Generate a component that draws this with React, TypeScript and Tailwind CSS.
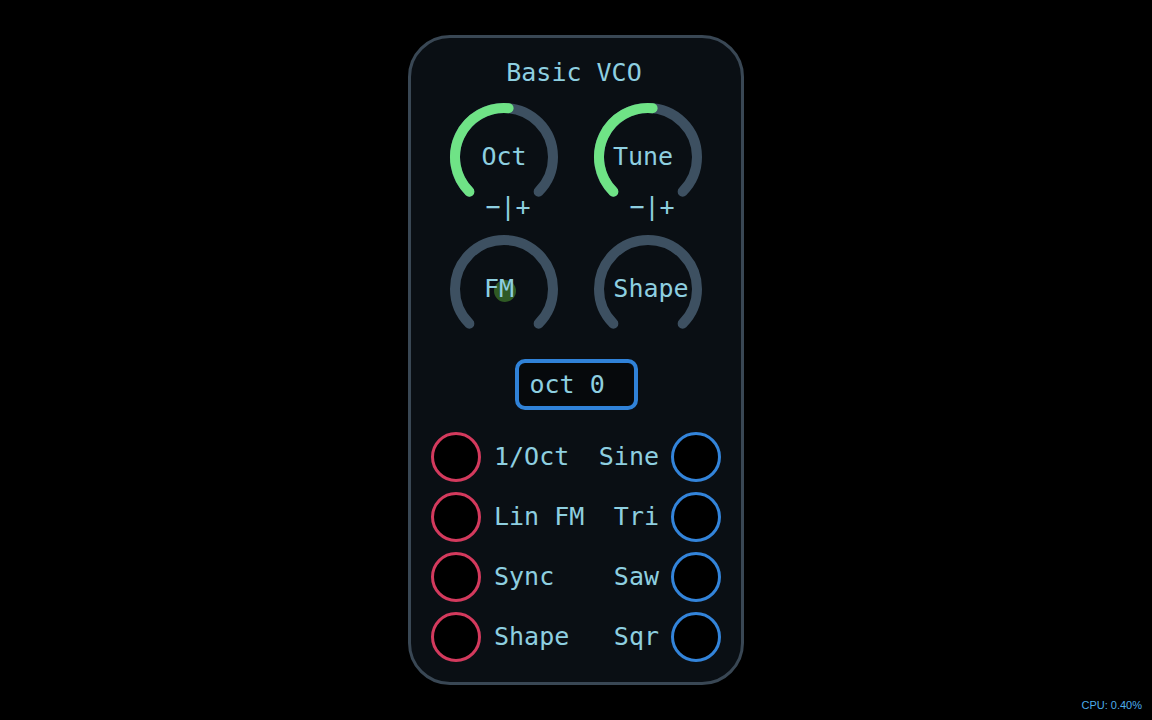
import React from "react"

const MONO = "font-['DejaVu_Sans_Mono','Liberation_Mono',monospace]"

// arc helpers — knob box is 110x110, radius 49, 270° sweep from bottom-left
const CX = 55
const CY = 55
const R = 49

function pointAt(fraction: number) {
  const a = ((225 - 270 * fraction) * Math.PI) / 180
  return { x: CX + R * Math.cos(a), y: CY - R * Math.sin(a) }
}

function arcPath(fraction: number) {
  const start = pointAt(0)
  const end = pointAt(fraction)
  const large = 270 * fraction > 180 ? 1 : 0
  return `M ${start.x} ${start.y} A ${R} ${R} 0 ${large} 1 ${end.x} ${end.y}`
}

interface KnobProps {
  label: string
  value: number
  labelClass?: string
  showRange?: boolean
  modDot?: boolean
}

function Knob({ label, value, labelClass = "", showRange, modDot }: KnobProps) {
  return (
    <div className="relative w-[110px] h-[110px] flex items-center justify-center">
      <svg width="110" height="110" className="absolute inset-0">
        <path d={arcPath(1)} fill="none" stroke="#3d5061" strokeWidth="10" strokeLinecap="round" />
        {value > 0 && (
          <path d={arcPath(value)} fill="none" stroke="#6fe386" strokeWidth="10" strokeLinecap="round" />
        )}
        {modDot && <circle cx="56" cy="57" r="11" fill="#2f5a24" />}
      </svg>
      <span className={`relative ${labelClass} ${MONO} text-[25px] leading-[30px] text-[#8ecfe0]`}>{label}</span>

      {/* range switch under the knob */}
      {showRange && (
        <span
          className={`absolute top-[92px] left-0 right-0 text-center pl-2 ${MONO} text-[25px] leading-[26px] text-[#8ecfe0]`}
        >
          −|+
        </span>
      )}
    </div>
  )
}

function Jack({ color }: { color: "red" | "blue" }) {
  return (
    <div
      className={`w-[50px] h-[50px] rounded-full bg-black border-[3px] ${
        color === "red" ? "border-[#d33a5d]" : "border-[#3384da]"
      }`}
    />
  )
}

const inputs = ["1/Oct", "Lin FM", "Sync", "Shape"]
const outputs = ["Sine", "Tri", "Saw", "Sqr"]

export default function App() {
  return (
    <div className="relative w-screen h-screen bg-black flex items-center justify-center">
      {/* Module panel */}
      <div className="w-[336px] h-[650px] rounded-[42px] border-[3px] border-[#394754] bg-[#0a0f14] flex flex-col items-center pt-[20px] px-[20px]">
        <div className={`${MONO} text-[25px] leading-[30px] h-[30px] text-[#8ecfe0] -translate-x-[2px]`}>
          Basic VCO
        </div>

        {/* Knobs */}
        <div className="mt-[14px] grid grid-cols-2 gap-x-[34px] gap-y-[22px]">
          <Knob label="Oct" value={0.52} showRange />
          <Knob label="Tune" value={0.52} showRange labelClass="-translate-x-[5px]" />
          <Knob label="FM" value={0} modDot labelClass="-translate-x-[5px]" />
          <Knob label="Shape" value={0} labelClass="translate-x-[3px]" />
        </div>

        {/* Display */}
        <div
          className={`mt-[15px] w-[123px] h-[51px] rounded-[10px] border-[4px] border-[#3082d8] bg-[#06090c] flex items-center pl-[11px] ${MONO} text-[25px] text-[#8ecfe0]`}
        >
          oct 0
        </div>

        {/* Jacks */}
        <div className="mt-[22px] w-full flex flex-col gap-[10px]">
          {inputs.map((inp, i) => (
            <div key={inp} className="flex items-center justify-between">
              <div className="flex items-center gap-[13px]">
                <Jack color="red" />
                <span className={`${MONO} text-[25px] leading-[30px] text-[#8ecfe0]`}>{inp}</span>
              </div>
              <div className="flex items-center gap-[12px]">
                <span className={`${MONO} text-[25px] leading-[30px] text-[#8ecfe0]`}>{outputs[i]}</span>
                <Jack color="blue" />
              </div>
            </div>
          ))}
        </div>
      </div>

      {/* CPU meter */}
      <div className="absolute right-[10px] bottom-[7px] font-['Liberation_Sans',Arial,sans-serif] text-[11px] text-[#4cacea]">
        CPU: 0.40%
      </div>
    </div>
  )
}
